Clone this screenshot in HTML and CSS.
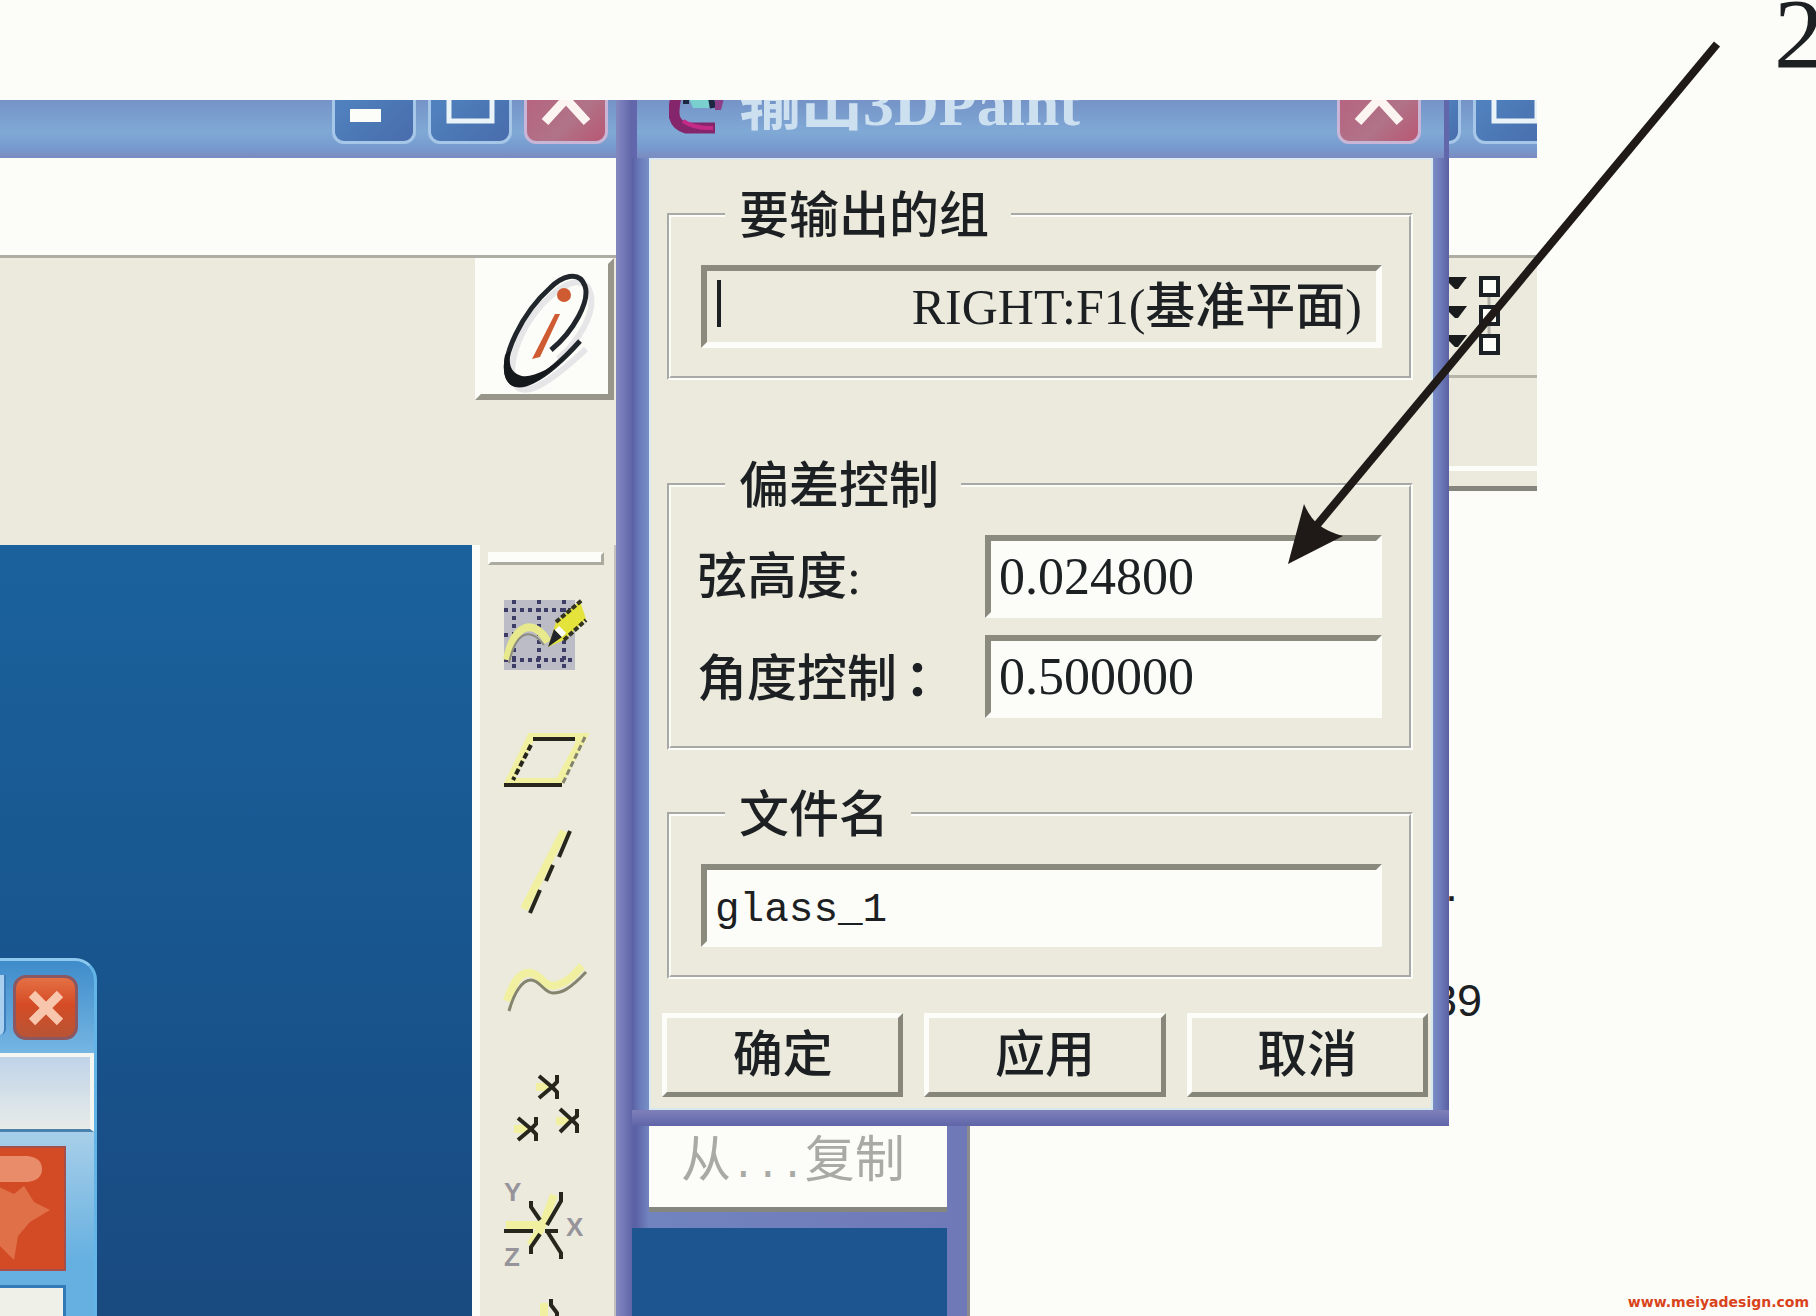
FILE: index.html
```html
<!DOCTYPE html>
<html lang="zh-CN">
<head>
    <meta charset="UTF-8">
    <meta name="viewport" content="width=device-width, initial-scale=1.0">
    <title>输出3DPaint</title>
    <link rel="stylesheet" href="styles.css">
</head>
<body>
    <div class="desktop">
        <!-- main application window -->
        <div class="app">
            <div class="titlebar">
                <button class="win-btn" aria-label="Minimize"><svg width="78" height="58"><path class="fill" d="M15 26h31v13H15z"/></svg></button>
                <button class="win-btn" aria-label="Maximize"><svg width="78" height="58"><path class="line" d="M18 -4h43v42H18z"/></svg></button>
                <button class="win-btn win-close" aria-label="Close"><svg width="78" height="58"><path class="cross" d="M18 39 39 16 60 39"/></svg></button>
            </div>
            <div class="menu-area"></div>
            <div class="top-tools">
                <button class="info-btn" aria-label="Info">
                    <svg width="126" height="128" viewBox="6 4 126 128">
                        <path d="M83 98C106 78 119 52 116 35C112 14 94 20 78 33C48 58 32 99 39 121C47 142 80 117 111 88" fill="none" stroke="#e6e6e8" stroke-width="6"/>
                        <path d="M76 89C99 70 115 40 110 25C104 8 86 16 75 27C48 51 25 96 33 116C40 135 70 119 105 80" fill="none" stroke="#20262b" stroke-width="5"/>
                        <path d="M30 94C26 118 33 126 45 126C59 125 80 108 94 92C75 109 54 119 44 114C35 110 34 103 35 90Z" fill="#15191c"/>
                        <circle cx="89" cy="34" r="7" fill="#cf5b32"/>
                        <path d="M80 53h5L65 96l-8 2Z" fill="#cf5b32"/>
                    </svg>
                </button>
            </div>
            <div class="work">
                <div class="canvas">
                    <div class="mini">
                        <div class="mini-title">
                            <span class="mini-max"></span>
                            <button class="mini-close" aria-label="Close"><svg width="36" height="36"><path d="M4 4 32 32M32 4 4 32"/></svg></button>
                        </div>
                        <div class="mini-bar"></div>
                        <div class="mini-body">
                            <div class="tile">
                                <svg width="66" height="121">
                                    <path d="M-20 30 14 46 24 38 34 54 50 62 30 74 18 88 14 112-10 88Z" fill="#df7048"/>
                                    <path d="M0 8h28q14 2 14 13t-14 13H0z" fill="#e88c6a"/>
                                </svg>
                            </div>
                            <div class="mini-panel"></div>
                        </div>
                    </div>
                </div>
                <div class="side-tools">
                    <div class="grip"></div>
                    <button class="tool" aria-label="Sketch">
                        <svg width="84" height="84">
                            <path d="M0 7h71v70H0z" fill="#bcbcc6"/>
                            <path d="M0 17h71M0 67h71M10 7v70M35 7v70M60 7v70M0 42h8" fill="none" stroke="#3c3c66" stroke-width="4" stroke-dasharray="4 4"/>
                            <path d="M3 67C10 30 30 25 44 49" fill="none" stroke="#e8e88c" stroke-width="8"/>
                            <path d="M5 70C12 38 26 34 40 52" fill="none" stroke="#8d8d80" stroke-width="2"/>
                            <path d="M44 54 52 29 76 8 82 26 60 47Z" fill="#e3e33c"/>
                            <path d="M44 54 50 36 58 44Z" fill="#22242c"/>
                            <path d="M53 35 60 42" stroke="#fcfdf8" stroke-width="6"/>
                            <path d="M52 29 78 7M60 47 82 27" stroke="#333320" stroke-width="4" stroke-dasharray="5 2"/>
                        </svg>
                    </button>
                    <button class="tool" aria-label="Plane">
                        <svg width="84" height="84">
                            <path class="glow" d="M27 26h52L55 71H5z"/>
                            <path class="ink" d="M29 28h42M0 74h58"/>
                            <path class="ink dash" d="M27 34 9 69"/>
                            <path class="thin dash" d="M81 26 58 74"/>
                        </svg>
                    </button>
                    <button class="tool" aria-label="Axis">
                        <svg width="84" height="88">
                            <path class="glow" d="M60 4 20 82"/>
                            <path class="ink" d="M66 4 55 30M49 38 42 54M36 63 26 86"/>
                        </svg>
                    </button>
                    <button class="tool" aria-label="Curve">
                        <svg width="84" height="84">
                            <path class="glow" d="M3 54C8 38 16 24 27 26S40 42 53 38 70 28 78 19"/>
                            <path class="thin" d="M5 64C10 46 18 33 27 33S40 46 49 46 66 42 82 25"/>
                        </svg>
                    </button>
                    <button class="tool" aria-label="Points">
                        <svg width="84" height="84">
                            <path class="glow" d="M32 22h14M10 64h14M52 56h14"/>
                            <path class="ink" d="M35 11 48 22 35 33M53 10v7l-5 5 5 5v7M14 53l13 11-13 11M32 52v7l-5 5 5 5v7M56 44l12 11-12 12M73 44v7l-5 4 5 5v8"/>
                        </svg>
                    </button>
                    <button class="tool" aria-label="Coordinate system">
                        <svg width="84" height="84">
                            <path class="glow" d="M2 42h36M38 44 50 12M38 44 26 62"/>
                            <path class="ink" d="M0 48h29M27 18v6l9 13M57 9v9L43 42M36 51 27 64v7M41 48h13M43 48 57 70v6"/>
                            <text x="0" y="18">Y</text>
                            <text x="62" y="53">X</text>
                            <text x="0" y="83">Z</text>
                        </svg>
                    </button>
                    <button class="tool" aria-label="More">
                        <svg width="84" height="84">
                            <path class="glow" d="M40 2v20"/>
                            <path class="ink" d="M47 -2v6l6 8v30"/>
                        </svg>
                    </button>
                </div>
            </div>
        </div>

        <!-- export dialog -->
        <div class="middle">
            <form class="dialog" onsubmit="event.preventDefault();">
                <div class="titlebar dialog-title">
                    <svg class="logo" width="60" height="46">
                        <path d="M7 -3C3 14 4 24 17 28L46 28" fill="none" stroke="#85256b" stroke-width="11"/>
                        <path d="M14 21Q26 29 44 28" fill="none" stroke="#c32b86" stroke-width="4"/>
                        <path d="M20 -2h20v10H24z" fill="#79d0cf"/>
                        <path d="M17 -2v6M42 -2l2 10" fill="none" stroke="#1b2740" stroke-width="6"/>
                        <path d="M46 -2v12h6l3-12" fill="#8d3e88"/>
                    </svg>
                    <h1>输出3DPaint</h1>
                    <button type="button" class="win-btn win-close" aria-label="Close"><svg width="78" height="58"><path class="cross" d="M18 39 39 16 60 39"/></svg></button>
                </div>
                <div class="dialog-body">
                    <fieldset class="group-first">
                        <legend>要输出的组</legend>
                        <div class="group-field">
                            <input class="field" type="text" value="RIGHT:F1(基准平面)" aria-label="要输出的组" readonly>
                        </div>
                    </fieldset>
                    <fieldset>
                        <legend>偏差控制</legend>
                        <div class="row">
                            <label for="chord">弦高度:</label>
                            <input class="field" id="chord" type="text" value="0.024800">
                        </div>
                        <div class="row">
                            <label for="angle">角度控制<span class="wide-colon">：</span></label>
                            <input class="field" id="angle" type="text" value="0.500000">
                        </div>
                    </fieldset>
                    <fieldset>
                        <legend>文件名</legend>
                        <input class="field field-mono" type="text" value="glass_1" aria-label="文件名">
                    </fieldset>
                    <div class="buttons">
                        <button type="submit">确定</button>
                        <button type="button">应用</button>
                        <button type="button">取消</button>
                    </div>
                </div>
            </form>
            <div class="below">
                <div class="copy-item">从<span class="dots">...</span>复制</div>
                <div class="below-fill"></div>
            </div>
        </div>

        <!-- window behind the dialog -->
        <div class="back">
            <div class="titlebar back-title">
                <button class="win-btn" aria-label="Minimize"></button>
                <button class="win-btn" aria-label="Maximize"><svg width="78" height="58"><path class="line" d="M18 -4h43v42H18z"/></svg></button>
            </div>
            <div class="menu-area"></div>
            <div class="back-tools">
                <svg width="60" height="84">
                    <path d="M0 2h18L9 14H6L0 8zM0 31h18L9 43H6L0 37zM0 60h18L9 72H6L0 66z" fill="#191b1d"/>
                    <path d="M40 21v40" stroke="#b5b4ab" stroke-width="3"/>
                    <path d="M32 3h17v17H32zM32 32h17v17H32zM32 61h17v17H32z" fill="#fcfdf8" stroke="#1b2024" stroke-width="4"/>
                </svg>
            </div>
            <div class="back-strip"></div>
            <div class="back-text">
                <p>·</p>
                <p>39</p>
            </div>
        </div>

        <svg class="arrow" width="440" height="540">
            <path d="M434 7 34 488" stroke="#1f1a18" stroke-width="8"/>
            <path d="M5 527 21 467Q27 481 36 488T60 499Z" fill="#1f1a18"/>
        </svg>
    </div>
    <span class="callout">2</span>
    <a class="site" href="#">www.meiyadesign.com</a>
</body>
</html>
```
FILE: styles.css
```css
* {
    box-sizing: border-box;
}

body {
    margin: 0;
    height: 100vh;
    padding-top: 100px;
    position: relative;
    overflow: hidden;
    background-color: #fcfdf8;
    color: #1c2022;
    font-family: "Liberation Serif", "Noto Sans CJK SC", serif;
    font-size: 50px;
    font-weight: 500;
    line-height: 50px;
}

button {
    padding: 0;
    border: none;
    background: none;
    font: inherit;
    color: inherit;
}

svg {
    display: block;
}

.desktop {
    position: relative;
    display: grid;
    grid-template-columns: 1fr 817px 88px;
    padding-right: 279px;
    height: 100%;
}

/* Title bars */
.titlebar {
    display: flex;
    justify-content: flex-end;
    align-items: flex-end;
    gap: 12px;
    height: 58px;
    padding: 0 8px 14px 0;
    overflow: hidden;
    background: linear-gradient(#7593c7, #80a9d6 55%, #779ccf 80%, #7b8bc1);
}

.win-btn {
    flex: none;
    width: 84px;
    height: 64px;
    border: 3px solid #a6c7e8;
    border-radius: 12px;
    background: linear-gradient(135deg, #5286c2, #4b76b4 60%, #4a6cac);
    overflow: hidden;
}

.win-close {
    background: linear-gradient(135deg, #b8607e, #b07388 60%, #b95773);
    border-color: #c9b5d6;
}

.win-btn .fill {
    fill: #fcfdf8;
}

.win-btn .line {
    fill: none;
    stroke: #e9f3f8;
    stroke-width: 5;
}

.win-btn .cross {
    fill: none;
    stroke: #fbf4f0;
    stroke-width: 9;
}

.menu-area {
    height: 97px;
    background-color: #fcfdf8;
}

/* Application window */
.app {
    display: flex;
    flex-direction: column;
    min-width: 0;
    min-height: 0;
    padding-right: 16px;
    background: linear-gradient(270deg, #6065a7, #767cb9 10px, #8389be 16px);
}

.top-tools {
    display: flex;
    justify-content: flex-end;
    height: 290px;
    padding-right: 2px;
    border-top: 3px solid #aeada3;
    background-color: #ebeadd;
}

.info-btn {
    width: 139px;
    height: 142px;
    border: 6px solid #fcfdf8;
    border-right-color: #98968a;
    border-bottom-color: #98968a;
    background-color: #fcfdf8;
}

.work {
    display: flex;
    flex: 1;
    min-height: 0;
}

.canvas {
    display: flex;
    flex: 1;
    align-items: flex-end;
    background: linear-gradient(#1b629c, #18568f 50%, #194a80);
}

.side-tools {
    width: 144px;
    overflow: hidden;
    border-left: 8px solid #fcfdf8;
    border-right: 2px solid #c3c0bd;
    background-color: #ebeadd;
}

.grip {
    height: 13px;
    margin: 7px 10px 11px 8px;
    border: 3px solid #acaba0;
    border-top-color: #fcfdf8;
    border-left-color: #fcfdf8;
    background-color: #fcfdf8;
}

.tool {
    display: flex;
    align-items: center;
    width: 100%;
    height: 118px;
    padding-left: 24px;
}

.tool svg {
    overflow: visible;
}

.tool .glow {
    fill: none;
    stroke: #f1f0a0;
    stroke-width: 8;
}

.tool .ink {
    fill: none;
    stroke: #26261d;
    stroke-width: 4;
}

.tool .thin {
    fill: none;
    stroke: #85846f;
    stroke-width: 3;
}

.tool .dash {
    stroke-dasharray: 6 3;
}

.tool text {
    font: bold 26px "Liberation Sans", sans-serif;
    fill: #96949a;
}

/* Small window in the corner */
.mini {
    display: flex;
    flex-direction: column;
    width: 97px;
    height: 358px;
    border-top: 3px solid #8dc9ee;
    border-right: 3px solid #62b5e6;
    border-top-right-radius: 22px;
    overflow: hidden;
    background-color: #78b9e4;
}

.mini-title {
    display: flex;
    flex: none;
    justify-content: space-between;
    height: 92px;
    padding: 14px 16px 0 0;
    background: linear-gradient(#3f8ccb, #75b6e3);
}

.mini-max {
    width: 6px;
    height: 60px;
    border-right: 2px solid #3f7fbc;
    border-radius: 0 0 6px 0;
    background: #a9d0ee;
}

.mini-close {
    display: grid;
    place-items: center;
    width: 65px;
    height: 65px;
    border: 3px solid #8b5761;
    border-radius: 13px;
    background: linear-gradient(#e57045, #d54c25 45%, #b85435);
}

.mini-close path {
    stroke: #f7c6ad;
    stroke-width: 9;
}

.mini-bar {
    flex: none;
    height: 79px;
    border: 4px solid #f4f6f1;
    border-left: none;
    border-bottom: 3px solid #4a81ad;
    background: linear-gradient(#bfd3e8, #e8ece9);
}

.mini-body {
    flex: 1;
    padding: 14px 28px 0 0;
    background: linear-gradient(#a8cfe9, #66b0e1 60%);
}

.tile {
    height: 125px;
    border: 2px solid #a54f4c;
    border-left: none;
    background-color: #d34b25;
}

.mini-panel {
    height: 60px;
    margin-top: 14px;
    border: 3px solid #337bb8;
    border-left: none;
    background-color: #eff1e8;
}

/* Export dialog */
.middle {
    min-width: 0;
    min-height: 0;
    display: flex;
    flex-direction: column;
}

.dialog {
    padding-bottom: 16px;
    background:
        linear-gradient(#7f80ba, #5f65a8) bottom / 100% 16px no-repeat,
        linear-gradient(90deg, #5a60a3, #6b7cba 8px, #7690c6 17px, #7a8dc4 801px, #6c79b8 809px, #5a60a3);
}

.dialog-title {
    justify-content: flex-start;
    padding: 0 28px 14px 37px;
    box-shadow: inset 5px 0 #6167aa, inset -5px 0 #6167aa;
}

.logo {
    align-self: flex-start;
    flex: none;
}

.dialog-title h1 {
    flex: 1;
    margin: 0 0 10px -2px;
    font-size: 62px;
    line-height: 60px;
    color: #cde0f0;
}

.dialog-body {
    margin: 0 16px 0 17px;
    padding: 31px 20px 13px 18px;
    box-shadow: inset 2px 2px #dceaf0, inset -2px -2px #d5e7ef;
    background-color: #ebeadd;
}

fieldset {
    display: flex;
    flex-direction: column;
    gap: 17px;
    margin: 0 0 38px;
    padding: 24px 27px 28px 30px;
    border: 4px groove #fcfdf8;
}

.group-first {
    margin-bottom: 79px;
}

legend {
    margin-left: 24px;
    padding: 2px 22px 0 14px;
}

.field {
    width: 100%;
    height: 83px;
    padding: 0 14px 0 8px;
    border: 6px solid #fcfdf8;
    border-top-color: #8b8a7e;
    border-left-color: #8b8a7e;
    border-radius: 0;
    outline: none;
    background-color: #fcfdf8;
    font: inherit;
    color: inherit;
}

.group-field {
    position: relative;
}

.group-field .field {
    padding-bottom: 10px;
    background-color: #ebeadd;
    text-align: right;
}

/* text caret */
.group-field::before {
    content: "";
    position: absolute;
    left: 16px;
    top: 15px;
    width: 4px;
    height: 47px;
    background-color: #1c2022;
}

.row {
    display: grid;
    grid-template-columns: 288px 1fr;
    align-items: center;
    margin-left: -4px;
}

.row .field {
    font-size: 52px;
}

.wide-colon {
    padding-left: 8px;
    font-family: "Noto Sans CJK TC", sans-serif;
    font-weight: bold;
}

.field-mono {
    padding-top: 8px;
    font-family: "Liberation Mono", monospace;
    font-size: 41px;
}

.buttons {
    display: grid;
    grid-template-columns: repeat(3, 1fr);
    gap: 21px;
    margin: -4px -15px 0 -5px;
}

.buttons button {
    height: 84px;
    border: 5px solid #fcfdf8;
    border-right-color: #87867a;
    border-bottom-color: #87867a;
    background-color: #ebeadd;
}

/* Menu left under the dialog */
.below {
    display: flex;
    flex-direction: column;
    flex: 1;
    width: 338px;
    border-right: 3px solid #8a8c8e;
    background: linear-gradient(90deg, #5b62a5 4px, #7184bf 17px, #7079b8);
    padding-right: 20px;
}

.copy-item {
    height: 86px;
    margin-left: 17px;
    padding: 9px 0 0 32px;
    border-bottom: 5px solid #85867f;
    background-color: #fcfdf8;
    color: #a9aaa6;
    font-weight: normal;
    white-space: nowrap;
}

.dots {
    font-family: "Liberation Mono", monospace;
    font-size: 41px;
}

.below-fill {
    flex: 1;
    margin-top: 16px;
    background-color: #1c5590;
}

/* Window behind */
.back {
    overflow: hidden;
}

.back-title {
    justify-content: flex-start;
    padding-left: 0;
}

.back-title .win-btn:first-child {
    width: 12px;
    border-left: none;
    border-radius: 0 0 12px 0;
}

.back-tools {
    height: 123px;
    padding-top: 17px;
    border-top: 3px solid #aeada3;
    border-bottom: 3px solid #b6b5aa;
    background-color: #ebeadd;
}

.back-strip {
    height: 113px;
    border-bottom: 5px solid #86857d;
    background: linear-gradient(#ebeadd 88px, #fcfdf8 88px, #fcfdf8 93px, #ebeadd 93px);
}

.back-text {
    padding-top: 380px;
    font-family: "Liberation Sans", sans-serif;
    font-size: 45px;
}

.back-text p {
    margin: 0 0 55px -17px;
}

.back-text p:first-child {
    margin-left: -5px;
}

/* Annotation */
.arrow {
    position: absolute;
    right: 93px;
    top: -63px;
}

.callout {
    position: absolute;
    right: 0;
    top: 0;
    width: 42px;
    font-size: 100px;
    line-height: 68px;
}

.site {
    position: absolute;
    right: 7px;
    bottom: 5px;
    font: bold 14px/18px "DejaVu Sans", sans-serif;
    color: #d9431b;
    text-decoration: none;
}
```
